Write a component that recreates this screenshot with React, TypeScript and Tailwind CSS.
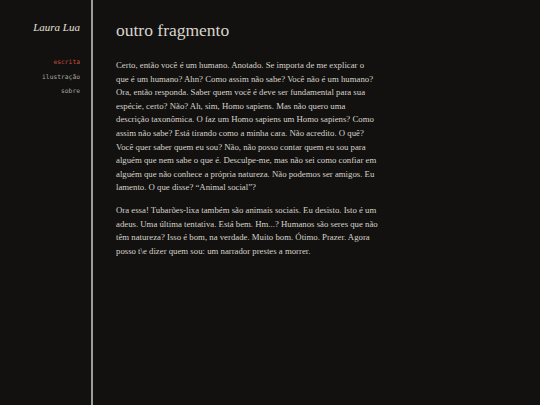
export default function App() {
  // lines kept as in the original layout
  const paragraphs = [
    [
      'Certo, então você é um humano. Anotado. Se importa de me explicar o',
      'que é um humano? Ahn? Como assim não sabe? Você não é um humano?',
      'Ora, então responda. Saber quem você é deve ser fundamental para sua',
      'espécie, certo? Não? Ah, sim, Homo sapiens. Mas não quero uma',
      'descrição taxonômica. O faz um Homo sapiens um Homo sapiens? Como',
      'assim não sabe? Está tirando como a minha cara. Não acredito. O quê?',
      'Você quer saber quem eu sou? Não, não posso contar quem eu sou para',
      'alguém que nem sabe o que é. Desculpe-me, mas não sei como confiar em',
      'alguém que não conhece a própria natureza. Não podemos ser amigos. Eu',
      'lamento. O que disse? “Animal social”?',
    ],
    [
      'Ora essa! Tubarões-lixa também são animais sociais. Eu desisto. Isto é um',
      'adeus. Uma última tentativa. Está bem. Hm...? Humanos são seres que não',
      'têm natureza? Isso é bom, na verdade. Muito bom. Ótimo. Prazer. Agora',
      'posso t\\e dizer quem sou: um narrador prestes a morrer.',
    ],
  ];

  return (
    <div className="flex h-screen w-full bg-[#121110] font-['Liberation_Serif',serif]">
      {/* Sidebar */}
      <aside className="w-[93px] shrink-0 border-r-2 border-[#9c9c9a] pr-[11px] pt-[17px] text-right">
        <h2 className="text-[11px] italic leading-[20px] text-[#e4e0d8]">Laura Lua</h2>
        <nav className="mt-[20px] flex flex-col gap-[5px] font-['DejaVu_Sans_Mono',monospace] text-[6.3px] leading-[9.5px]">
          <a className="text-[#c4503c]">escrita</a>
          <a className="text-[#a8a59f]">ilustração</a>
          <a className="text-[#a8a59f]">sobre</a>
        </nav>
      </aside>

      {/* Content */}
      <main className="flex-1 pl-[23px] pt-[18px]">
        <h1 className="text-[17.5px] leading-[24px] text-[#d9d5cc]">outro fragmento</h1>
        <div className="mt-[17px] space-y-[9px] text-[8.75px] leading-[13.6px] text-[#d6d2c9]">
          {paragraphs.map((lines, i) => (
            <p key={i}>
              {lines.map((l) => (
                <span key={l} className="block whitespace-nowrap">
                  {l}
                </span>
              ))}
            </p>
          ))}
        </div>
      </main>
    </div>
  );
}
